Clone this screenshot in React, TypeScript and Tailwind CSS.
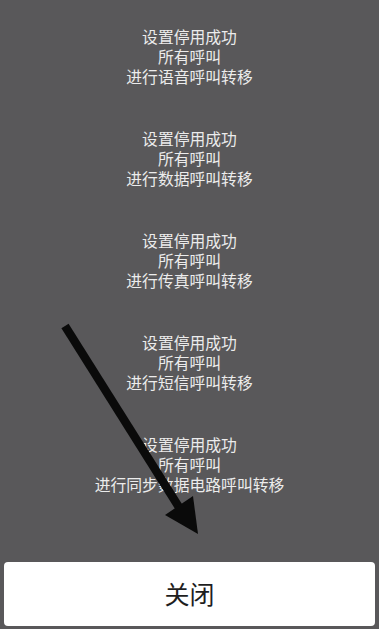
import React from "react";

const groups = [
  "进行语音呼叫转移",
  "进行数据呼叫转移",
  "进行传真呼叫转移",
  "进行短信呼叫转移",
  "进行同步数据电路呼叫转移",
];

export default function App() {
  return (
    <div
      className="relative flex h-[629px] w-[379px] flex-col overflow-hidden bg-[#59585a]"
      style={{ fontFamily: '"Noto Sans CJK SC", "Noto Sans", sans-serif' }}
    >
      <div className="flex flex-1 flex-col items-center gap-[41.3px] pt-[27px]">
        {groups.map((g, i) => (
          <div
            key={i}
            className="flex flex-col items-center text-[15.8px] leading-[20.2px] text-[#ececec]"
          >
            <div>设置停用成功</div>
            <div>所有呼叫</div>
            <div>{g}</div>
          </div>
        ))}
      </div>
      <div className="mx-[4px] mb-[3px] flex h-[64px] items-center justify-center rounded-[4px] bg-white text-[25px] text-[#1e1e1e]">
        关闭
      </div>
      <svg
        className="pointer-events-none absolute left-0 top-0"
        width="379"
        height="629"
        viewBox="0 0 379 629"
      >
        <line
          x1="65"
          y1="326"
          x2="182"
          y2="512"
          stroke="#0a0a0a"
          strokeWidth="8.5"
        />
        <polygon points="198,534 165,515 193,496" fill="#0a0a0a" />
      </svg>
    </div>
  );
}
